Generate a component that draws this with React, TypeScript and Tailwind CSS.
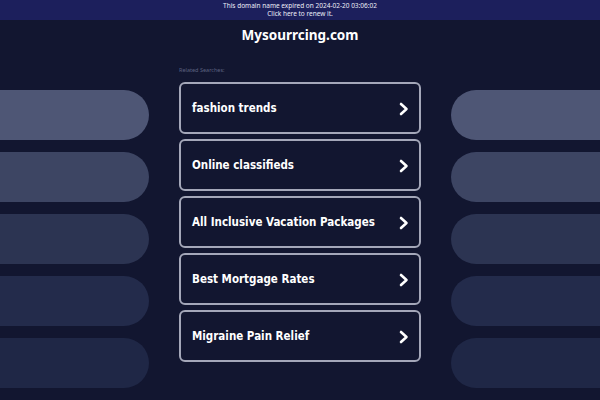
const searches = [
  "fashion trends",
  "Online classifieds",
  "All Inclusive Vacation Packages",
  "Best Mortgage Rates",
  "Migraine Pain Relief",
];

const pillColors = [
  "bg-[#4e5675]",
  "bg-[#3d4563]",
  "bg-[#2c3452]",
  "bg-[#232b4b]",
  "bg-[#1f2746]",
];

function Chevron() {
  return (
    <svg width="12" height="14" viewBox="0 0 12 14" fill="none">
      <polyline
        points="3,2 8.5,7 3,12"
        stroke="#ffffff"
        strokeWidth="2.6"
        strokeLinecap="round"
        strokeLinejoin="round"
      />
    </svg>
  );
}

function Pills({ side }: { side: "left" | "right" }) {
  return (
    <div className="flex flex-col gap-3 pt-[40px]">
      {pillColors.map((c) => (
        <div
          key={c}
          className={`h-[50px] ${c} ${
            side === "left" ? "rounded-r-full" : "rounded-l-full"
          }`}
        />
      ))}
    </div>
  );
}

export default function App() {
  return (
    <div className="w-[600px] h-[400px] overflow-hidden bg-[#121630] font-['Noto_Sans',sans-serif]">
      <div className="h-[20px] bg-[#1c1f5c] flex flex-col items-center justify-center text-[6.5px] leading-[8px] text-[#eceef7]">
        <p>This domain name expired on 2024-02-20 03:06:02</p>
        <p>Click here to renew it.</p>
      </div>

      <div className="h-[30px] flex items-center justify-center">
        <h1 className="text-[13.5px] font-bold text-white">Mysourrcing.com</h1>
      </div>

      <div className="flex gap-[30px]">
        <div className="w-[149px]">
          <Pills side="left" />
        </div>

        <div className="w-[242px] pt-[16px]">
          <p className="text-[5.5px] leading-[8px] text-[#5d6280]">Related Searches:</p>
          <div className="mt-[8px] flex flex-col gap-[5px]">
            {searches.map((s) => (
              <div
                key={s}
                className="h-[52px] border-2 border-[#a4a7b9] rounded-md flex items-center justify-between pl-[11px] pr-[9px] pt-[2px]"
              >
                <span className="font-['DejaVu_Sans_Condensed','DejaVu_Sans',sans-serif] font-bold text-[11.5px] text-white whitespace-nowrap">
                  {s}
                </span>
                <Chevron />
              </div>
            ))}
          </div>
        </div>

        <div className="w-[149px]">
          <Pills side="right" />
        </div>
      </div>
    </div>
  );
}
